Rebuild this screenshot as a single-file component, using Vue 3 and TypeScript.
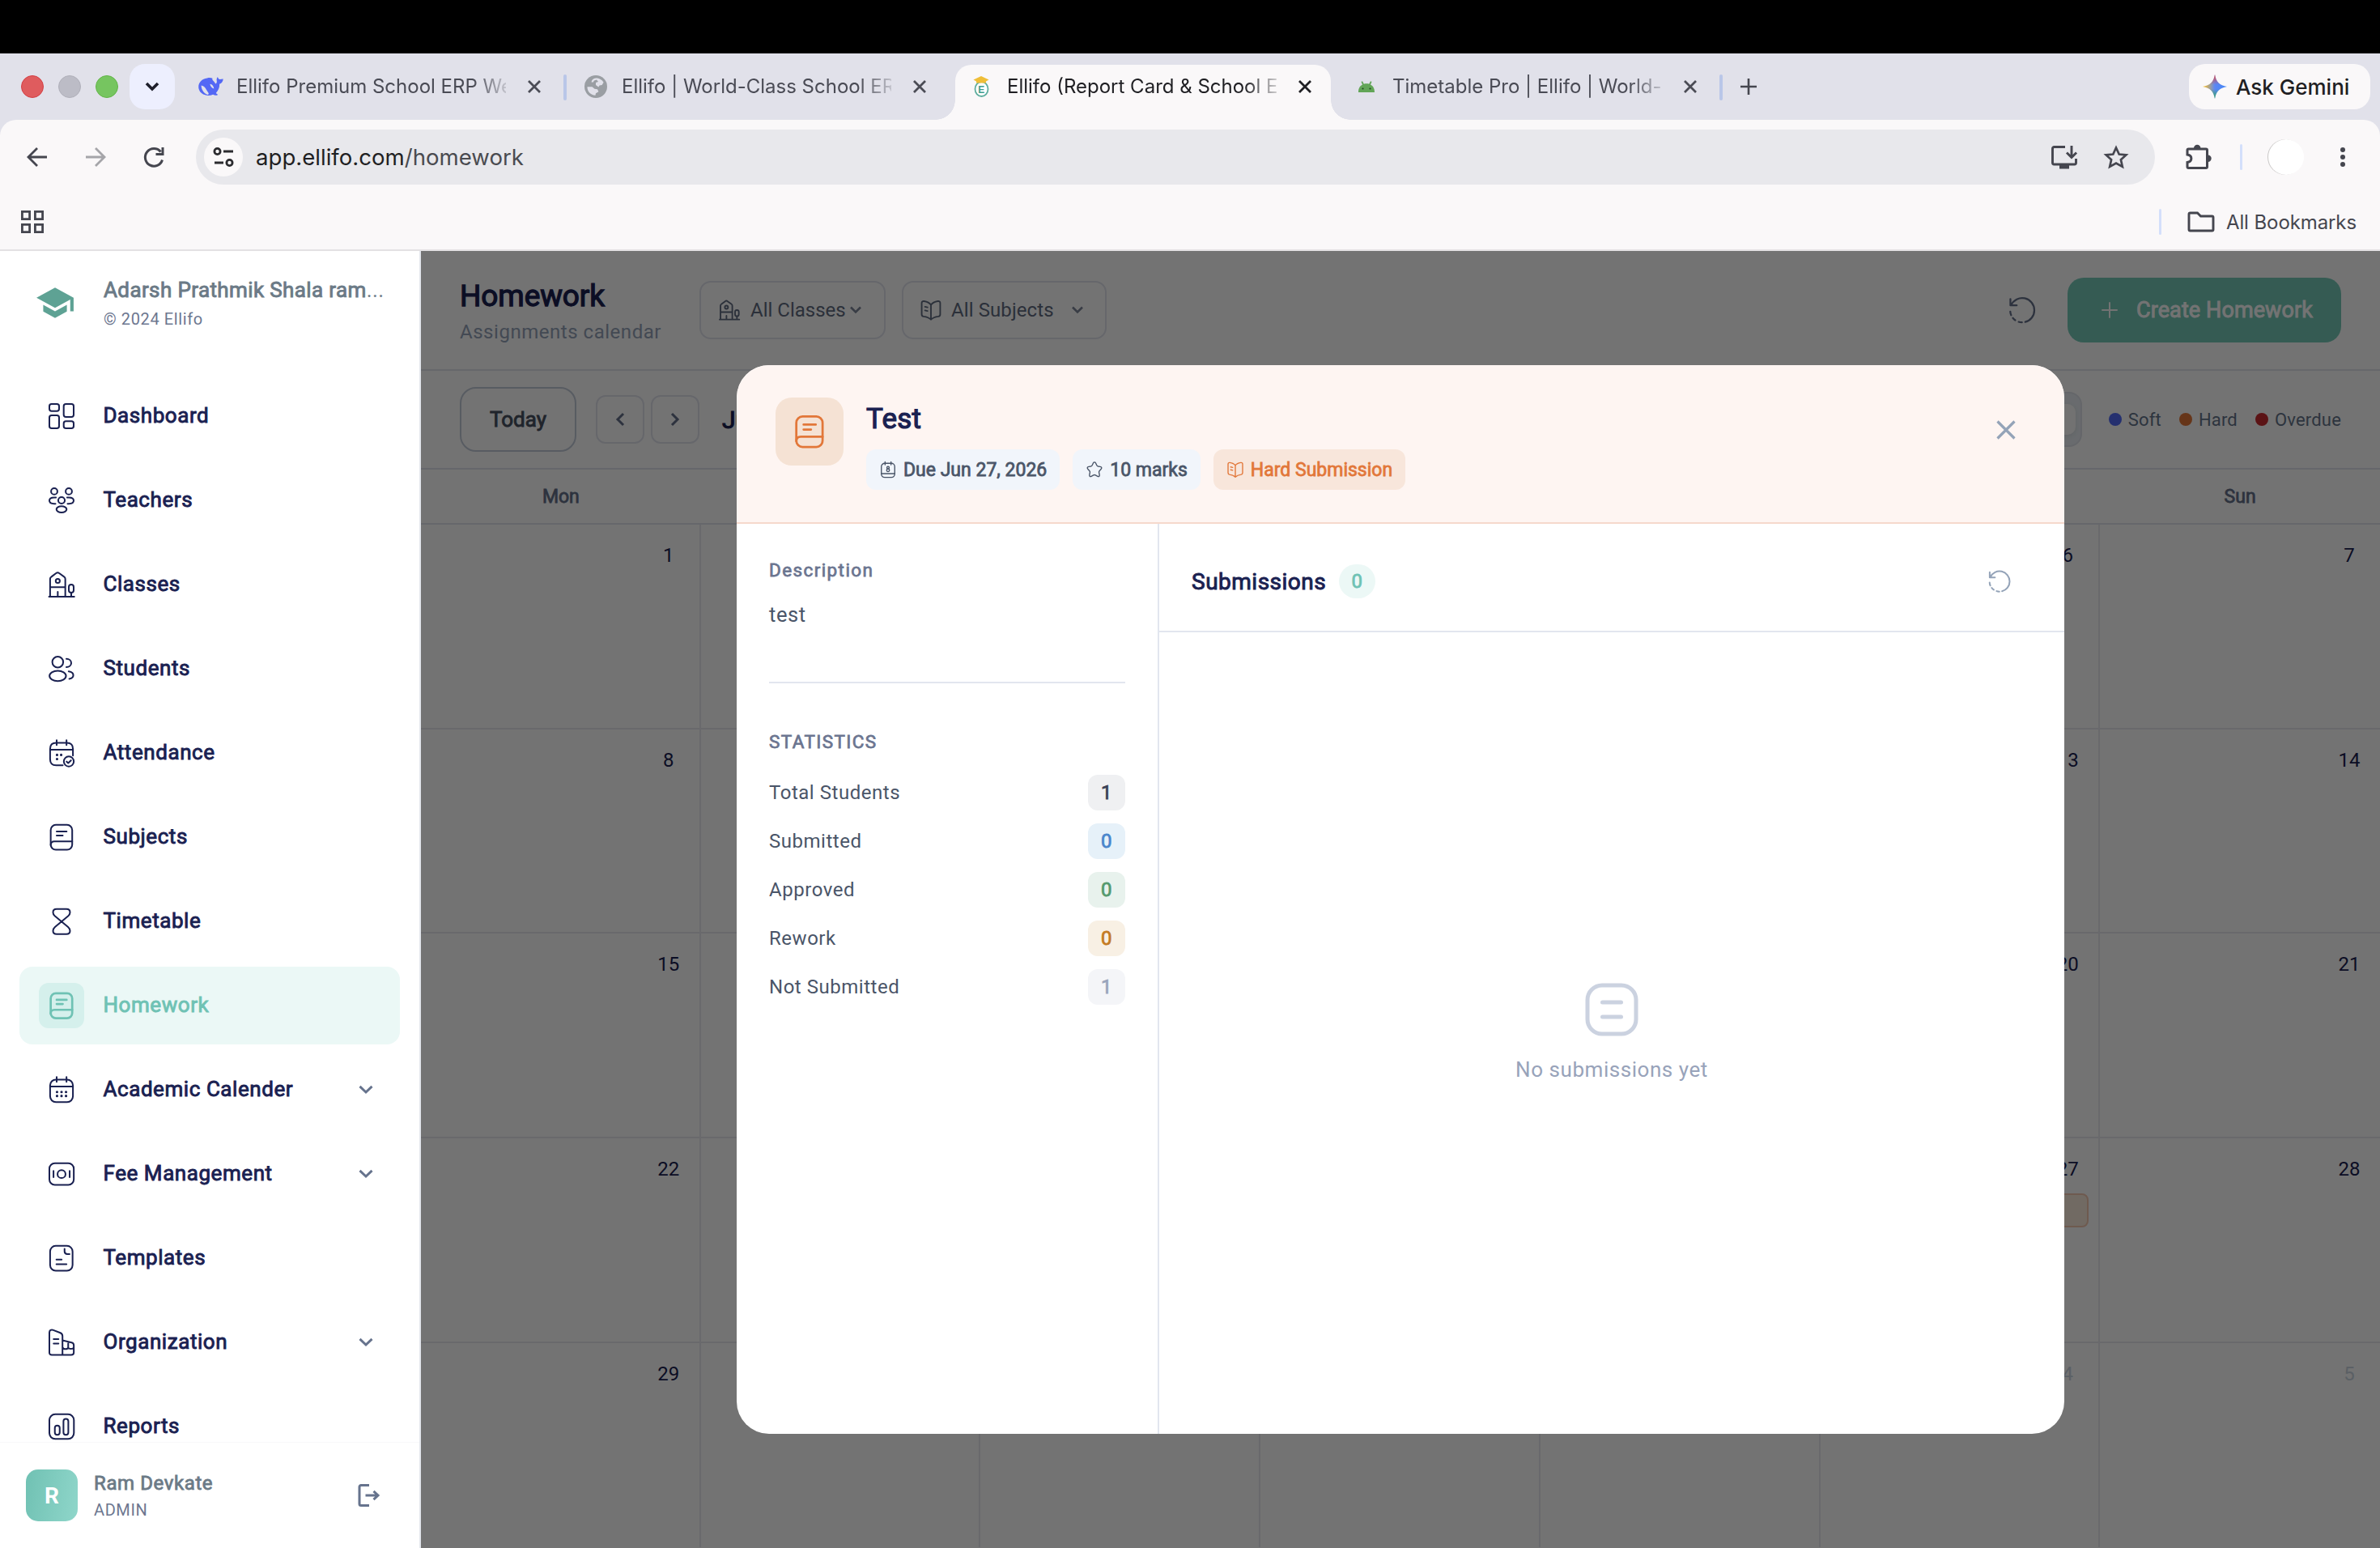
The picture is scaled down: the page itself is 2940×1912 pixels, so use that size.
<script setup lang="ts">
interface NavItem { label: string; icon: string; expandable?: boolean; active?: boolean }
interface Day { n: number; muted?: boolean; event?: boolean }

const calendarBody = '<path d="M8 1.5v4M16.1 1.5v4M2.6 9.3h18.8"/>'
const icons: Record<string, string> = {
  dashboard: '<rect x="2" y="2" width="8" height="5.8" rx="1.8"/><rect x="13.8" y="2" width="8.2" height="10.6" rx="1.8"/><rect x="2" y="11.4" width="8" height="10.6" rx="1.8"/><rect x="13.8" y="16.2" width="8.2" height="5.8" rx="1.8"/>',
  teachers: '<circle cx="6" cy="4.6" r="2.6"/><circle cx="18" cy="4.6" r="2.6"/><circle cx="12" cy="12" r="2.7"/><ellipse cx="12" cy="19.4" rx="4.2" ry="2.6"/><path d="M7.4 9.6H6C3.6 9.6 2 10.6 2 12.2s1.6 2.6 4 2.6h1M16.6 9.6H18c2.4 0 4 1 4 2.6s-1.6 2.6-4 2.6h-1"/>',
  classes: '<path d="M1.7 22h20.8M2.6 22V7.4c0-.9.4-1.4 1.1-1.8l3.8-2.9a2 2 0 0 1 2.6 0l4 2.9c.7.4 1 1 1 1.8V22M2.6 14.1h12.5M8.9 18v4M20 18.6V22"/><circle cx="8.9" cy="9" r="1.7"/><rect x="18" y="12" width="4" height="6.6" rx="2"/>',
  students: '<circle cx="8.9" cy="6.5" r="4.5"/><ellipse cx="8.9" cy="17.9" rx="6.8" ry="4.2"/><path d="M16 3.9c2.3 0 4 1.5 4 3.4s-1.7 3.4-4 3.4M17.9 14.2c2.2.3 3.8 1.5 3.8 3.2 0 1.5-1.4 2.6-3.3 2.9"/>',
  attendance: calendarBody + '<path d="M13 22.2H7.6c-3.3 0-5-1.7-5-5V8.6c0-3.3 1.7-5 5-5h8.8c3.3 0 5 1.7 5 5v5.6"/><circle cx="18" cy="19" r="4.1"/><path d="m16.2 19.1 1.3 1.2 2.3-2.2"/><path stroke-width="2.1" d="M8.3 13.6h.01M11.7 13.6h.01M8.3 17h.01"/>',
  book: '<rect x="3.1" y="1.9" width="17.7" height="20.5" rx="4.2"/><path d="M3.1 18.6c0-1.9 1.1-3.1 3-3.1h14.7M8 7.3h8.2M8 10.7h5"/>',
  timetable: '<path d="M8 1.9h8c1.9 0 3 1 3 2.7 0 1.5-.6 2.2-1.6 3.1L12 12.2 6.6 7.7C5.6 6.8 5 6.1 5 4.6c0-1.7 1.1-2.7 3-2.7ZM8 22.5h8c1.9 0 3-1 3-2.7 0-1.5-.6-2.2-1.6-3.1L12 12.2l-5.4 4.5C5.6 17.6 5 18.3 5 19.8c0 1.7 1.1 2.7 3 2.7Z"/>',
  calendar: calendarBody + '<rect x="2.6" y="3.6" width="18.8" height="18.6" rx="4.8"/><path stroke-width="2.1" d="M8.3 13.8h.01M12 13.8h.01M15.7 13.8h.01M8.3 17.1h.01M12 17.1h.01M15.7 17.1h.01"/>',
  fee: '<rect x="2" y="3.2" width="20.1" height="17.8" rx="4.5"/><circle cx="12" cy="12.1" r="3.3"/><path d="M5.4 9.5v5.2M18.7 9.5v5.2"/>',
  templates: '<rect x="2.6" y="1.9" width="18.5" height="20.4" rx="4.6"/><path d="M14.5 4.4v2c0 1.5.8 2.3 2.3 2.3h1.8M7.8 13.2h4.3M7.8 17h8.3"/>',
  organization: '<path d="M2 20.5V4c0-1.9 1.5-2.8 3.2-2.1L11 4.2c1.2.5 1.8 1.3 1.8 2.6v15.6H4c-1.3 0-2-.7-2-1.9ZM12.8 22.4H20c1.3 0 2.1-.8 2.1-2v-6.1c0-1.2-.6-1.9-1.8-2.2l-7.5-1.7M5.5 9.3h4M5.5 13h4M17.5 11.6v4.6M13 16.2c.6 1.7 3.9 1.7 4.5 0 .7 1.6 3.8 1.6 4.5 0"/>',
  reports: '<rect x="2" y="1.9" width="20.2" height="20.3" rx="4.8"/><rect x="6.5" y="11.2" width="4" height="7.6" rx="2"/><rect x="13.6" y="5.7" width="4" height="13.1" rx="2"/>',
  openBook: '<path d="M12 22V6.5M12 6.5C10.5 4.2 7.5 3 4.6 2.6 3.2 2.4 2.2 3.2 2.2 4.6v11.8c0 1.3.8 2.1 2 2.3 3 .4 5.9 1.4 7.8 3.3 1.9-1.9 4.8-2.9 7.8-3.3 1.2-.2 2-1 2-2.3V4.6c0-1.4-1-2.2-2.4-2C16.500 3 13.500 4.200 12 6.500ZM5.700 8.500l2.700.6M5.700 12.300l2.700.6"/>',
  day: '<path d="M8 1.5v4M16 1.5v4M3 17.5h18"/><rect x="3" y="3.5" width="18" height="19" rx="4.5"/><circle cx="12" cy="9.5" r="1.6"/><circle cx="12" cy="12.9" r="1.9"/>',
  star: '<path d="M10.3 3.3c.8-1.6 2.6-1.6 3.4 0l1.4 2.9c.4.8.9 1.2 1.8 1.4l2.7.4c2.1.4 2.7 2 1.2 3.5l-2 2.1c-.7.7-.9 1.4-.7 2.3l.6 2.8c.5 2.4-.8 3.4-2.9 2.2l-2.4-1.4c-.9-.5-1.9-.5-2.8 0l-2.4 1.4c-2.1 1.2-3.4.2-2.9-2.2l.6-2.8c.2-.9 0-1.6-.7-2.3l-2-2.1C1.7 10 2.3 8.4 4.4 8l2.7-.4c.9-.2 1.4-.6 1.8-1.4z"/>',
  refresh: '<path d="M2.3 2.9v5.2h5.2M2.9 7.9A10 10 0 0 1 22 12.1c0 4.700-3.200 8.600-7.500 9.700M11.800 22.100c-1 0-1.900-.1-2.700-.4M6.300 20.300c-.8-.5-1.400-1.100-2-1.800M2.900 16.200c-.4-.9-.7-1.900-.7-3"/>',
}

const nav: NavItem[] = [
  { label: 'Dashboard', icon: 'dashboard' },
  { label: 'Teachers', icon: 'teachers' },
  { label: 'Classes', icon: 'classes' },
  { label: 'Students', icon: 'students' },
  { label: 'Attendance', icon: 'attendance' },
  { label: 'Subjects', icon: 'book' },
  { label: 'Timetable', icon: 'timetable' },
  { label: 'Homework', icon: 'book', active: true },
  { label: 'Academic Calender', icon: 'calendar', expandable: true },
  { label: 'Fee Management', icon: 'fee', expandable: true },
  { label: 'Templates', icon: 'templates' },
  { label: 'Organization', icon: 'organization', expandable: true },
  { label: 'Reports', icon: 'reports' },
]

const weekdays = ['Mon', 'Tue', 'Wed', 'Thu', 'Fri', 'Sat', 'Sun']
const days: Day[] = Array.from({ length: 35 }, (_, i) =>
  i < 30 ? { n: i + 1, event: i === 26 } : { n: i - 29, muted: true },
)

const stats = [
  { label: 'Total Students', value: 1, tone: 'slate' },
  { label: 'Submitted', value: 0, tone: 'blue' },
  { label: 'Approved', value: 0, tone: 'green' },
  { label: 'Rework', value: 0, tone: 'amber' },
  { label: 'Not Submitted', value: 1, tone: 'grey' },
]
const legend = [
  { label: 'Soft', color: '#526cf5' },
  { label: 'Hard', color: '#e27739' },
  { label: 'Overdue', color: '#cb2b30' },
]
const lights = ['red', 'idle', 'green']
const tabs = [
  { title: 'Ellifo Premium School ERP We', fav: 'whale' },
  { title: 'Ellifo | World-Class School ER', fav: 'globe' },
  { title: 'Ellifo (Report Card & School E', fav: 'crest', active: true },
  { title: 'Timetable Pro | Ellifo | World-C', fav: 'droid' },
]
</script>

<template>
  <div class="screen">
    <div class="bezel"></div>
    <div class="chrome">
      <div class="tabstrip">
        <i v-for="l in lights" :key="l" class="light" :class="l"></i>
        <span class="tabsearch"><svg width="20" height="14" viewBox="0 0 20 14"><path d="M3 3l7 7 7-7" fill="none" stroke="#1f1f2b" stroke-width="3.6" /></svg></span>
        <div v-for="t in tabs" :key="t.title" class="tab" :class="{ active: t.active }">
          <div v-if="t.active" class="tabshape"></div>
          <span class="fav">
            <svg v-if="t.fav === 'whale'" width="32" height="28" viewBox="0 0 32 28"><path fill="#5468f5" fill-rule="evenodd" d="M12 3.500c2.500-.8 4.500-.6 6.500.3-.6 1.200 0 2 1.400 3.400 1 1 1.700 2 2.300 3.200 1.500-.6 1.900-2 1.500-4C23.400 4.500 24 3 25 2c.3 1.700 1.200 2.700 2.600 3 1.500-.2 2.700-.7 4.100-.6-.2 3.200-1.900 5.500-4.600 6.300.2 4.500-1.300 8-4.400 11.200l2.500 2c-2 1.300-4 1-6-.2C12 26.700 4 24 1.800 17.600-.4 11 4 4.500 12 3.500ZM4.600 12.500c.2 5.500 3.200 9.800 8.200 11.500 1.900-.8.600-2.500-.8-4.500-1.600-2.600-3.200-6.300-7.400-7Zm10.800-1.700c2.600.2 4.500 2.600 4.900 5.600-2.600-.6-4.500-2.700-4.900-5.600Z" /></svg>
            <svg v-else-if="t.fav === 'globe'" width="28" height="28" viewBox="0 0 28 28"><circle cx="14" cy="14" r="14" fill="#9a9ea3" /><path fill="#e1e1ea" d="M14 3.400c4 0 8 2 9.600 5.400l-2 3.200-3 .4-1.300 2-3.300-2.500V9l3-1-2-2.500-3 .9c-.9.500-.4 2.200-1.900 2.200H8.500C9 5.500 11 3.500 14 3.400ZM3.500 14.200h6l3 2.600 3.500.5 1.400 3-3.400 2-.5 2.400C7.500 24.500 3.300 20 3.500 14.200Z" /></svg>
            <svg v-else-if="t.fav === 'crest'" width="22" height="28" viewBox="0 0 22 28"><ellipse cx="11.5" cy="17" rx="8" ry="9" fill="#fff" stroke="#5fae9f" stroke-width="1.8" /><path d="M11 1 1.500 5.500 5 7.500V9.500h12V7.500l3.500-2Z" fill="#efbe38" /><text x="11.3" y="21.5" font-family="Liberation Sans, sans-serif" font-weight="700" font-size="12" text-anchor="middle" fill="#3f9c8b">E</text></svg>
            <svg v-else width="22" height="14" viewBox="0 0 22 14"><path fill="#62a557" d="M1 14c0-5 2-8 5-9.500L4.500 1 6 .3 7.800 3.700c2-.6 4.400-.6 6.400 0L16 .3l1.500.7L16 4.500c3 1.500 5 4.500 5 9.500Z" /><circle cx="6.5" cy="9.5" r="1.1" fill="#234d22" /><circle cx="15.5" cy="9.5" r="1.1" fill="#234d22" /></svg>
          </span>
          <span class="tabtitle">{{ t.title }}</span>
          <svg class="tabclose" width="18" height="18" viewBox="0 0 18 18"><path d="M2 2l14 14M16 2L2 16" stroke="currentColor" stroke-width="2.8" /></svg>
        </div>
        <svg class="plus" width="20" height="20" viewBox="0 0 20 20"><path d="M10 0v20M0 10h20" stroke="#45464f" stroke-width="2.6" /></svg>
        <div class="gemini">
          <svg width="30" height="30" viewBox="0 0 30 30">
            <defs>
              <linearGradient id="gm" x1="0" y1="0" x2="1" y2="0"><stop offset=".05" stop-color="#f5bd2c" /><stop offset=".5" stop-color="#5b87f5" /><stop offset="1" stop-color="#4285f4" /></linearGradient>
              <linearGradient id="gv" x1="0" y1="0" x2="0" y2="1"><stop offset="0" stop-color="#ea4335" /><stop offset=".42" stop-color="#ea4335" stop-opacity="0" /><stop offset=".6" stop-color="#34a853" stop-opacity="0" /><stop offset="1" stop-color="#34a853" /></linearGradient>
            </defs>
            <path d="M15 0c1.200 8.500 6 13.700 15 15-9 1.300-13.800 6.500-15 15C13.800 21.500 9 16.300 0 15 9 13.700 13.800 8.500 15 0Z" fill="url(#gm)" />
            <path d="M15 0c1.200 8.500 6 13.700 15 15-9 1.300-13.800 6.500-15 15C13.800 21.500 9 16.300 0 15 9 13.700 13.800 8.500 15 0Z" fill="url(#gv)" />
          </svg>
          <span>Ask Gemini</span>
        </div>
      </div>
      <div class="browserbody">
        <div class="toolbar">
          <svg class="tb" viewBox="0 0 32 32"><path d="M28 16H5M16 5L5 16l11 11" fill="none" stroke="#45464f" stroke-width="2.8" /></svg>
          <svg class="tb" viewBox="0 0 32 32"><path d="M4 16h23M16 5l11 11-11 11" fill="none" stroke="#a5a5a9" stroke-width="2.8" /></svg>
          <svg class="tb" viewBox="0 0 32 32"><path d="M26.500 19.500A10.800 10.800 0 1 1 24.500 9.500M27 4v8.500h-8.500" fill="none" stroke="#45464f" stroke-width="3" /></svg>
          <div class="omnibox">
            <span class="site"><svg width="26" height="26" viewBox="0 0 26 26" fill="none" stroke="#2b2b2f" stroke-width="2.8"><circle cx="5.5" cy="6" r="3.6" /><path d="M13 6h12M2 20h11" /><circle cx="20.5" cy="20" r="3.6" /></svg></span>
            <span class="url">app.ellifo.com<em>/homework</em></span>
            <svg class="install" width="34" height="30" viewBox="0 0 34 30" fill="none" stroke="#45464f" stroke-width="2.9"><path d="M18 2.500H4.500a2 2 0 0 0-2 2v17.500a2 2 0 0 0 2 2h25a2 2 0 0 0 2-2V17M26 1v14M20 9.500l6 6 6-6" /><path d="M11 27h12" stroke-width="5" /></svg>
            <svg class="fav-star" width="32" height="30" viewBox="0 0 32 30"><path d="M16 3.500l3.700 8 8.700.9-6.500 5.900 1.900 8.600L16 22.500l-7.800 4.400 1.900-8.600-6.500-5.900 8.700-.9Z" fill="none" stroke="#45464f" stroke-width="2.7" /></svg>
          </div>
          <svg class="puzzle" width="34" height="34" viewBox="0 0 34 34"><path d="M3 8.500a1.500 1.500 0 0 1 1.500-1.500H26a1.500 1.500 0 0 1 1.500 1.500V29a1.500 1.500 0 0 1-1.500 1.500H4.500A1.500 1.500 0 0 1 3 29v-5.500c6.500-1 6.500-8.500 0-9.500Z" fill="none" stroke="#45464f" stroke-width="3" /><path d="M11 6a4.200 4.200 0 0 1 8.400 0ZM28.500 14.500a4.200 4.200 0 0 1 0 8.400Z" fill="#45464f" /></svg>
          <i class="vbar"></i>
          <i class="avatar-ring"></i>
          <svg class="dots" width="8" height="26" viewBox="0 0 8 26" fill="#45464f"><circle cx="4" cy="4" r="3" /><circle cx="4" cy="13" r="3" /><circle cx="4" cy="22" r="3" /></svg>
        </div>
        <div class="bookmarks">
          <svg width="28" height="28" viewBox="0 0 28 28" fill="none" stroke="#45464f" stroke-width="2.8"><path d="M1.400 1.400h9.200v9.200H1.400zM17.400 1.400h9.200v9.200h-9.200zM1.400 17.400h9.200v9.200H1.400zM17.400 17.400h9.200v9.200h-9.200z" /></svg>
          <i class="vbar bm"></i>
          <svg class="folder" width="34" height="26" viewBox="0 0 34 26"><path d="M2 3.500A1.500 1.500 0 0 1 3.500 2h9l4 4h14A1.500 1.500 0 0 1 32 7.500v15a1.500 1.500 0 0 1-1.500 1.500h-27A1.500 1.500 0 0 1 2 22.500Z" fill="none" stroke="#45464f" stroke-width="2.9" /></svg>
          <span>All Bookmarks</span>
        </div>
      </div>
    </div>

    <div class="page">
      <aside class="sidebar">
        <div class="brand">
          <svg width="50" height="50" viewBox="0 0 24 24" fill="#5ea294"><path d="M5 13.180v4L12 21l7-3.820v-4L12 17l-7-3.820zM12 3L1 9l11 6 9-4.910V17h2V9L12 3z" /></svg>
          <div class="brandtext">
            <span class="school">Adarsh Prathmik Shala ram<em>...</em></span>
            <span class="copy">© 2024 Ellifo</span>
          </div>
        </div>
        <nav class="nav">
          <a v-for="n in nav" :key="n.label" class="navitem" :class="{ active: n.active }">
            <span class="navicon"><svg class="ic" viewBox="0 0 24 24" v-html="icons[n.icon]"></svg></span>
            <span class="navlabel">{{ n.label }}</span>
            <svg v-if="n.expandable" class="navchev" width="18" height="12" viewBox="0 0 18 12"><path d="M1.500 1.800L9 9l7.500-7.200" /></svg>
          </a>
        </nav>
        <div class="user">
          <span class="avatar">R</span>
          <div class="usertext">
            <span class="uname">Ram Devkate</span>
            <span class="role">ADMIN</span>
          </div>
          <svg class="logout" width="28" height="30" viewBox="0 0 28 30"><path d="M14 2.500H4a2 2 0 0 0-2 2v21a2 2 0 0 0 2 2h10M9.500 15H25M19.500 9.800L25 15l-5.500 5.200" /></svg>
        </div>
      </aside>

      <main class="main">
        <header class="head">
          <div class="headtext">
            <span class="h1">Homework</span>
            <span class="sub">Assignments calendar</span>
          </div>
          <div class="select classes">
            <svg class="ic" viewBox="0 0 24 24" v-html="icons.classes"></svg>
            <span>All Classes</span>
            <svg class="selchev" width="16" height="12" viewBox="0 0 16 12"><path d="M2 2.500l6 6 6-6" /></svg>
          </div>
          <div class="select subjects">
            <svg class="ic" viewBox="0 0 24 24" v-html="icons.openBook"></svg>
            <span>All Subjects</span>
            <svg class="selchev" width="16" height="12" viewBox="0 0 16 12"><path d="M2 2.500l6 6 6-6" /></svg>
          </div>
          <svg class="ic reload" viewBox="0 0 24 24" v-html="icons.refresh"></svg>
          <button class="create">
            <svg width="20" height="20" viewBox="0 0 20 20"><path d="M10 1v18M1 10h18" stroke="#fff" stroke-width="2" stroke-linecap="round" /></svg>
            <span>Create Homework</span>
          </button>
        </header>
        <div class="calbar">
          <button class="today">Today</button>
          <button class="step prev"><svg width="12" height="18" viewBox="0 0 12 18"><path d="M10 2L3 9l7 7" /></svg></button>
          <button class="step next"><svg width="12" height="18" viewBox="0 0 12 18"><path d="M2 2l7 7-7 7" /></svg></button>
          <span class="month">June 2026</span>
          <div class="views"><span></span></div>
          <div v-for="l in legend" :key="l.label" class="leg"><i :style="{ background: l.color }"></i><span>{{ l.label }}</span></div>
        </div>
        <div class="weekdays"><span v-for="d in weekdays" :key="d">{{ d }}</span></div>
        <div class="grid">
          <div v-for="(d, i) in days" :key="i" class="cell" :class="{ muted: d.muted }">
            <span class="num">{{ d.n }}</span>
            <span v-if="d.event" class="event"></span>
          </div>
        </div>
      </main>

      <div class="scrim"></div>
      <section class="modal">
        <header class="mhead">
          <span class="mic"><svg class="ic" viewBox="0 0 24 24" v-html="icons.book"></svg></span>
          <div class="mtitle">
            <span class="mname">Test</span>
            <div class="chips">
              <span class="chip"><svg class="ic" viewBox="0 0 24 24" v-html="icons.day"></svg>Due Jun 27, 2026</span>
              <span class="chip"><svg class="ic" viewBox="0 0 24 24" v-html="icons.star"></svg>10 marks</span>
              <span class="chip hard"><svg class="ic" viewBox="0 0 24 24" v-html="icons.openBook"></svg>Hard Submission</span>
            </div>
          </div>
          <svg class="mclose" width="26" height="26" viewBox="0 0 26 26"><path d="M2.500 2.500l21 21M23.500 2.500l-21 21" stroke="#94a3b8" stroke-width="3.2" /></svg>
        </header>
        <div class="mbody">
          <div class="mleft">
            <span class="seclabel">Description</span>
            <span class="desc">test</span>
            <hr />
            <span class="seclabel stat">STATISTICS</span>
            <div v-for="s in stats" :key="s.label" class="row">
              <span>{{ s.label }}</span><b :class="s.tone">{{ s.value }}</b>
            </div>
          </div>
          <div class="mright">
            <div class="subhead">
              <span class="subt">Submissions</span>
              <span class="badge">0</span>
              <svg class="ic reload2" viewBox="0 0 24 24" v-html="icons.refresh"></svg>
            </div>
            <div class="empty">
              <svg width="66" height="66" viewBox="0 0 66 66"><rect x="3" y="3" width="60" height="60" rx="18" /><path d="M21.500 24h23M21.500 42h23" /></svg>
              <span>No submissions yet</span>
            </div>
          </div>
        </div>
      </section>
    </div>
  </div>
</template>

<style>
body { margin: 0; overflow: hidden; }
</style>

<style scoped>
.screen { width: 2940px; height: 1912px; display: flex; flex-direction: column; overflow: hidden; font-family: Roboto, "Liberation Sans", sans-serif; background: #fff; }
.screen * { box-sizing: border-box; }
span, b { white-space: nowrap; }
b { font-weight: inherit; }
button { font: inherit; padding: 0; background: none; }
.bezel { height: 66px; background: #000; flex: none; }
.chrome { flex: none; height: 244px; background: #e1e1ea; font-family: Inter, "Liberation Sans", sans-serif; }
.tabstrip { height: 82px; display: flex; align-items: center; padding-left: 26px; }
.light { width: 28px; height: 28px; border-radius: 50%; margin-right: 18px; flex: none; border: 1px solid; }
.light.red { background: #df5c5e; border-color: #d43f45; }
.light.idle { background: #bcbcc6; border-color: #b0b0ba; }
.light.green { background: #76c560; border-color: #62b548; margin-right: 14px; }
.tabsearch { width: 56px; height: 56px; border-radius: 19px; background: #edeffe; display: grid; place-items: center; margin-right: 4px; flex: none; }
.tab { width: 476px; height: 82px; flex: none; position: relative; display: flex; align-items: center; padding-left: 24px; color: #4a4b55; }
.tab > * { position: relative; }
.tab:nth-of-type(1)::after, .tab:nth-of-type(4)::after { content: ""; position: absolute; right: -4px; top: 26px; width: 4px; height: 32px; border-radius: 2px; background: #b9c6e8; }
.tab.active { color: #1f1f23; }
.tab > .tabshape { position: absolute; left: 8px; right: 4px; top: 14px; bottom: 0; background: #faf8f9; border-radius: 20px 20px 0 0; }
.tabshape::before, .tabshape::after { content: ""; position: absolute; bottom: 0; width: 24px; height: 24px; }
.tabshape::before { left: -24px; background: radial-gradient(circle at 0 0, transparent 23.5px, #faf8f9 24px); }
.tabshape::after { right: -24px; background: radial-gradient(circle at 100% 0, transparent 23.5px, #faf8f9 24px); }
.fav { width: 32px; display: flex; justify-content: center; margin-right: 16px; }
.tabtitle { width: 333px; overflow: hidden; font-size: 24px; line-height: 34px; -webkit-mask-image: linear-gradient(90deg, #000 88%, transparent 103%); mask-image: linear-gradient(90deg, #000 88%, transparent 103%); }
.tabclose { margin-left: 26px; }
.plus { margin-left: 26px; }
.gemini { margin-left: auto; margin-right: 12px; width: 224px; height: 56px; border-radius: 20px; background: #faf8f9; display: flex; align-items: center; padding-left: 17px; gap: 11px; font-size: 26px; font-weight: 500; color: #1f1f23; }
.browserbody { height: 162px; background: #faf8f9; border-radius: 20px 20px 0 0; border-bottom: 2px solid #e3e1e3; }
.toolbar { height: 92px; display: flex; align-items: center; padding-left: 30px; }
.tb { width: 32px; height: 32px; margin-right: 40px; flex: none; }
.omnibox { margin-left: -4px; width: 2420px; height: 68px; border-radius: 34px; background: #e8e8ec; display: flex; align-items: center; padding-left: 10px; flex: none; }
.site { width: 48px; height: 48px; border-radius: 50%; background: #faf8f9; display: grid; place-items: center; }
.url { margin-left: 16px; font-size: 27.6px; color: #1f1f23; }
.url em { font-style: normal; color: #4a4b50; }
.install { margin-left: auto; }
.fav-star { margin-left: 31px; margin-right: 32px; }
.puzzle { margin-left: 37px; }
.vbar { width: 3px; height: 32px; border-radius: 2px; background: #d3dffb; margin-left: 34px; }
.avatar-ring { width: 44px; height: 44px; border-radius: 50%; background: #fff; margin-left: 32px; box-shadow: -1px 0 0 #c9c7c6; }
.dots { margin-left: 44px; }
.bookmarks { height: 68px; display: flex; align-items: center; padding: 0 29px 0 26px; font-size: 24px; letter-spacing: -.1px; color: #45464f; }
.vbar.bm { margin-left: auto; }
.folder { margin-left: 32px; margin-right: 14px; }

.page { flex: 1; min-height: 0; display: flex; position: relative; }
/* semi-bold labels: regular outlines thickened evenly */
.school, .navlabel, .uname, .h1, .create, .today, .month, .weekdays, .mname, .chip, .seclabel, .row b, .subt, .badge { -webkit-text-stroke: .034em currentColor; }
.ic { width: 36px; height: 36px; flex: none; fill: none; stroke: currentColor; stroke-width: 1.35; stroke-linecap: round; stroke-linejoin: round; overflow: visible; }
.sidebar { width: 520px; border-right: 2px solid #e3e6ec; background: #fff; display: flex; flex-direction: column; flex: none; }
.brand { height: 156px; padding: 27px 0 0 43px; display: flex; flex: none; }
.brand svg { margin-top: 12px; }
.brandtext { display: flex; flex-direction: column; margin-left: 35px; }
.school { font-size: 26px; line-height: 42px; letter-spacing: .38px; color: #6b7a86; }
.school em { font-style: normal; -webkit-text-stroke: 0; }
.copy { font-size: 20px; line-height: 30px; letter-spacing: .6px; color: #6d7790; }
.nav { height: 1315px; overflow: hidden; padding: 0 24px; display: flex; flex-direction: column; gap: 8px; flex: none; }
.navitem { height: 96px; border-radius: 16px; display: flex; align-items: center; padding-left: 24px; flex: none; color: #1a2151; }
.navitem.active { background: #ebf8f6; color: #6fc2b4; }
.navicon { width: 56px; height: 56px; border-radius: 12px; display: grid; place-items: center; margin-right: 23.5px; }
.active .navicon { background: #d5f0ec; }
.active .ic { stroke-width: 1.8; }
.navlabel { font-size: 26px; letter-spacing: .56px; padding-bottom: 2px; }
.navchev { margin-left: auto; margin-right: 33px; fill: none; stroke: #66738d; stroke-width: 3; }
.user { flex: 1; border-top: 1px solid #f8f9fa; display: flex; padding: 33px 0 0 32px; }
.avatar { width: 64px; height: 64px; border-radius: 15px; background: linear-gradient(100deg, #70c1b3, #8fd6ca); color: #fff; font-size: 28px; font-weight: 700; display: grid; place-items: center; }
.usertext { margin-left: 20px; display: flex; flex-direction: column; width: 307px; }
.uname { font-size: 24px; line-height: 36px; letter-spacing: .6px; color: #6b7a86; margin-top: -1px; }
.role { font-size: 20px; line-height: 30px; letter-spacing: .6px; color: #6d7790; }
.logout { margin: 17px 0 0 19px; fill: none; stroke: #66738d; stroke-width: 3; }

.main { flex: 1; min-width: 0; display: flex; flex-direction: column; }
.head { height: 148px; border-bottom: 2px solid #e2e4ee; display: flex; align-items: center; padding: 0 48px; flex: none; }
.headtext { width: 296px; display: flex; flex-direction: column; margin-top: 5px; }
.h1 { font-size: 37px; line-height: 44px; letter-spacing: -.1px; color: #1a2151; margin-bottom: 5px; }
.sub { font-size: 24px; line-height: 34px; letter-spacing: .53px; color: #94a3b8; }
.select { height: 72px; border: 2px solid #e2e4ee; border-radius: 14px; display: flex; align-items: center; font-size: 24px; color: #5f6b80; }
.select .ic { width: 28px; height: 28px; stroke-width: 1.6; margin-right: 12px; }
.select.classes { width: 230px; padding-left: 21px; }
.select.subjects { width: 253px; margin-left: 20px; padding-left: 20px; letter-spacing: .1px; }
.select.subjects .ic { margin-right: 11px; }
.selchev { fill: none; stroke: #7c8699; stroke-width: 2.6; margin-left: auto; margin-right: 27px; }
.subjects .selchev { margin-right: 26px; }
.reload { margin-left: auto; margin-right: 38px; stroke-width: 1.5; color: #64708a; }
.create { width: 338px; height: 80px; border: 0; border-radius: 20px; background: #75cab8; color: #fff; display: flex; align-items: center; padding-left: 42px; gap: 23px; font-size: 27px; letter-spacing: .1px; }
.calbar { height: 122px; border-bottom: 2px solid #e2e4ee; display: flex; align-items: center; padding: 0 48px; flex: none; }
.today { width: 144px; height: 80px; border: 2px solid #c3ccda; border-radius: 20px; font-size: 26px; color: #475061; }
.step { width: 60px; height: 60px; border: 2px solid #e2e4ee; border-radius: 12px; display: grid; place-items: center; }
.step path { fill: none; stroke: #64708a; stroke-width: 3; }
.prev { margin-left: 24px; }
.next { margin-left: 8px; }
.month { margin-left: 28px; font-size: 30px; color: #1a2151; }
.views { margin-left: auto; width: 300px; height: 68px; border-radius: 16px; background: #e8eef3; border: 2px solid #dfe3ea; display: flex; align-items: center; justify-content: flex-end; padding-right: 6px; margin-right: 11px; }
.views span { width: 140px; height: 38px; border-radius: 10px; background: #fdfdfd; box-shadow: 0 2px 6px rgba(0, 0, 0, .08); }
.leg { display: flex; align-items: center; font-size: 22px; letter-spacing: .18px; color: #64748b; margin-left: 22px; }
.leg i { width: 16px; height: 16px; border-radius: 50%; margin-right: 8px; }
.weekdays { height: 68px; border-bottom: 2px solid #e2e4ee; display: grid; grid-template-columns: repeat(7, 1fr); align-items: center; text-align: center; font-size: 23px; color: #64708a; flex: none; }
.grid { display: grid; grid-template-columns: repeat(7, 1fr); grid-auto-rows: 252.7px; }
.cell { border-right: 2px solid #e8e9f0; border-bottom: 2px solid #e8e9f0; display: flex; flex-direction: column; padding: 10px; color: #1a2151; }
.cell:nth-child(7n) { border-right: 0; }
.cell:nth-child(n + 29) { border-bottom: 0; }
.num { align-self: flex-end; width: 56px; height: 56px; line-height: 56px; text-align: center; font-size: 24px; }
.muted { color: #cbd5e1; }
.event { height: 42px; border: 2px solid #f4c8b0; border-radius: 8px; background: #fbebdc; margin: 2px 2px 0; }
.scrim { position: absolute; left: 520px; top: 0; right: 0; bottom: 0; background: rgba(0, 0, 0, .55); }

.modal { position: absolute; left: 910px; top: 141px; width: 1640px; height: 1320px; border-radius: 40px; background: #fff; overflow: hidden; display: flex; flex-direction: column; }
.mhead { height: 196px; flex: none; background: #fef5f2; border-bottom: 2px solid #f6d9cc; display: flex; padding: 40px 59px 0 48px; }
.mic { width: 84px; height: 84px; border-radius: 20px; background: #f5e2d4; color: #e27739; display: grid; place-items: center; }
.mic .ic { width: 44px; height: 44px; stroke-width: 1.5; }
.mtitle { margin-left: 28px; flex: 1; }
.mname { display: block; height: 64px; line-height: 53px; font-size: 35px; letter-spacing: .2px; color: #1a2151; }
.chips { display: flex; gap: 16px; }
.chip { height: 50px; border-radius: 12px; background: #f1f5fb; color: #4a5568; display: flex; align-items: center; padding: 0 16px; font-size: 23px; }
.chip .ic { width: 22px; height: 22px; margin-right: 8px; stroke-width: 1.5; }
.chip.hard { background: #f8e6db; color: #e27739; }
.mclose { margin-top: 27px; }
.mbody { flex: 1; display: flex; }
.mleft { width: 522px; border-right: 2px solid #e2e6ef; padding: 40px 40px 0; display: flex; flex-direction: column; }
.seclabel { font-size: 22.5px; line-height: 34px; letter-spacing: 1.4px; color: #6b7590; align-self: flex-start; }
.desc { font-size: 25.5px; line-height: 40px; letter-spacing: .6px; color: #4a5568; margin-top: 18px; align-self: flex-start; }
.mleft hr { width: 440px; height: 2px; border: 0; background: #e2e6ef; margin: 63px 0 55px; }
.stat { margin-bottom: 24px; }
.row { height: 44px; margin-bottom: 16px; display: flex; align-items: center; justify-content: space-between; font-size: 24px; letter-spacing: .53px; color: #4a5568; }
.row b { width: 46px; height: 44px; line-height: 44px; text-align: center; border-radius: 12px; }
.slate { background: #eff0f2; color: #3a4258; }
.blue { background: #e6f1f9; color: #4a86cc; }
.green { background: #e8f2ed; color: #559a6e; }
.amber { background: #f8f0e4; color: #c47b22; }
.grey { background: #f4f5f8; color: #9aa5bd; }
.mright { flex: 1; display: flex; flex-direction: column; }
.subhead { height: 134px; border-bottom: 2px solid #e2e6ef; display: flex; align-items: center; padding: 10px 65px 0 40px; flex: none; }
.subt { font-size: 28px; letter-spacing: .5px; color: #1a2151; }
.badge { width: 45px; height: 42px; line-height: 42px; border-radius: 21px; text-align: center; font-size: 24px; background: #ecf8f6; color: #6fc2b4; margin-left: 15.5px; }
.reload2 { width: 30px; height: 30px; margin-left: auto; color: #94a3b8; stroke-width: 1.6; }
.empty { flex: 1; display: flex; flex-direction: column; align-items: center; justify-content: center; color: #98a3ba; font-size: 26px; letter-spacing: .55px; gap: 26px; padding-bottom: 3px; }
.empty svg { fill: none; stroke: #cbd2e0; stroke-width: 5; stroke-linecap: round; }
</style>
